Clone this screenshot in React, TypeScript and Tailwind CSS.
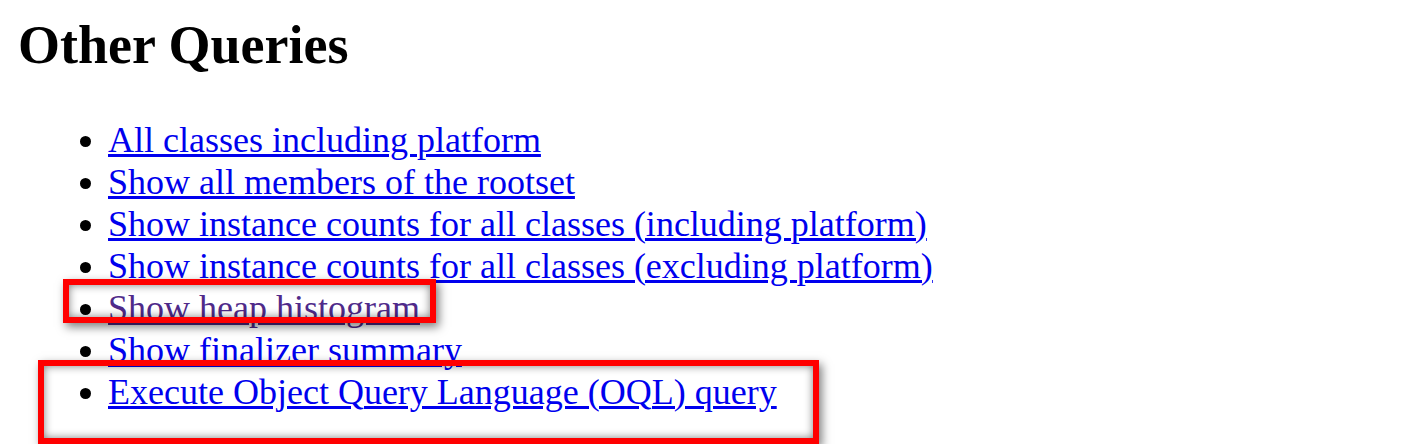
import React from 'react';

type QueryLink = {
  label: string;
  visited?: boolean;
};

const queries: QueryLink[] = [
  { label: 'All classes including platform' },
  { label: 'Show all members of the rootset' },
  { label: 'Show instance counts for all classes (including platform)' },
  { label: 'Show instance counts for all classes (excluding platform)' },
  { label: 'Show heap histogram', visited: true },
  { label: 'Show finalizer summary' },
  { label: 'Execute Object Query Language (OQL) query' },
];

const App: React.FC = () => {
  return (
    <div className="relative h-[444px] w-full overflow-hidden bg-white pl-[18px] pt-[14px] font-['Liberation_Serif','Times_New_Roman',serif] text-black">
      <h2 className="m-0 text-[54px] font-bold leading-[62px]">Other Queries</h2>

      <ul className="m-0 mt-[42.5px] list-disc pl-[90px] text-[36px] leading-[42px]">
        {queries.map((q) => (
          <li key={q.label}>
            <a
              href="#"
              className={`underline decoration-[3px] underline-offset-[2px] ${q.visited ? 'text-[#4f2a8a]' : 'text-[#0000ee]'}`}
            >
              {q.label}
            </a>
          </li>
        ))}
      </ul>

      {/* annotation boxes drawn over the list */}
      <div className="pointer-events-none absolute left-[63px] top-[279px] h-[44px] w-[373px] border-[6px] border-[#ff0000] shadow-[3px_4px_9px_rgba(0,0,0,0.5),inset_0_0_9px_rgba(0,0,0,0.5)]" />
      <div className="pointer-events-none absolute left-[38px] top-[360px] h-[84px] w-[781px] border-[6px] border-[#ff0000] shadow-[3px_4px_9px_rgba(0,0,0,0.5),inset_0_0_9px_rgba(0,0,0,0.5)]" />
    </div>
  );
};

export default App;
